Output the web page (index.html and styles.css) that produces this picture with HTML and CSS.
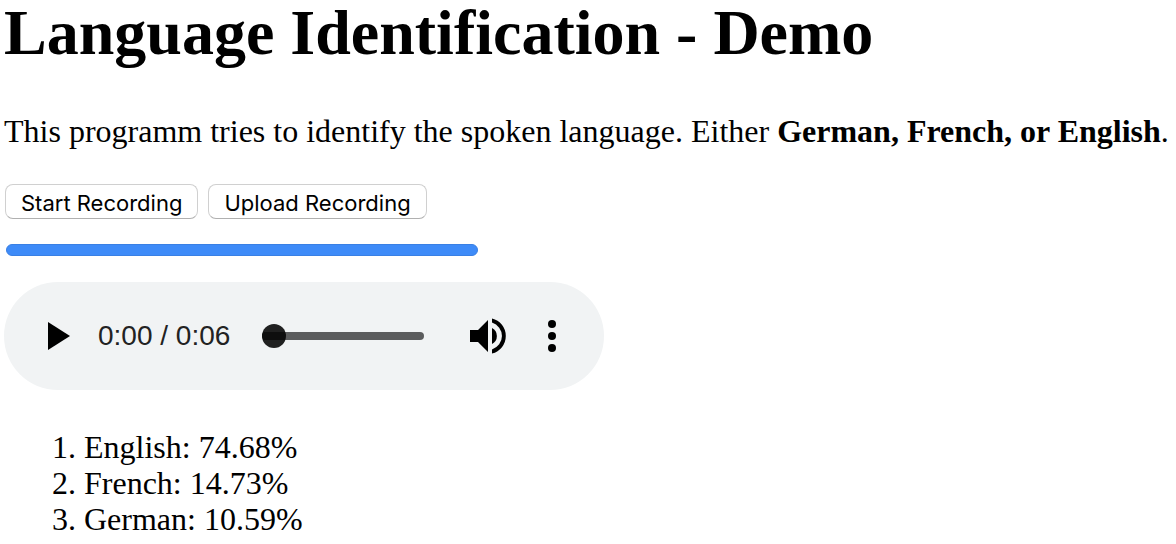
FILE: index.html
```html
<!DOCTYPE html>
<html lang="en">
<head>
<meta charset="utf-8">
<title>Language Identification - Demo</title>
<link rel="stylesheet" href="styles.css">
</head>
<body>
<main class="page">
  <h1 class="title">Language Identification - Demo</h1>
  <p class="intro">This programm tries to identify the spoken language. Either <b>German, French, or English</b>.</p>
  <div class="actions">
    <button class="button" type="button">Start Recording</button>
    <button class="button" type="button">Upload Recording</button>
  </div>
  <div class="progress" role="progressbar" aria-label="Upload progress" aria-valuenow="100"></div>
  <section class="player" aria-label="Recording">
    <button class="icon-button play" type="button" aria-label="Play">
      <svg width="24" height="28" viewBox="0 0 24 28"><path d="M1 0V28L23 14Z"/></svg>
    </button>
    <span class="time">0:00 / 0:06</span>
    <input class="seek" type="range" min="0" max="6" value="0" aria-label="Seek">
    <button class="icon-button volume" type="button" aria-label="Mute">
      <svg width="36" height="36" viewBox="0 0 36 36"><path d="M0 12V24H8L18 34V2L8 12Z"/><path d="M22 10V26A9 9 0 0 0 22 10Z"/><path d="M22 0.500V4.600A14 14 0 0 1 22 31.400V35.500A18 18 0 0 0 22 0.500Z"/></svg>
    </button>
    <button class="icon-button more" type="button" aria-label="More options">
      <svg width="8" height="32" viewBox="0 0 8 32"><circle cx="4" cy="4" r="4"/><circle cx="4" cy="16" r="4"/><circle cx="4" cy="28" r="4"/></svg>
    </button>
  </section>
  <ol class="results">
    <li>English: 74.68%</li>
    <li>French: 14.73%</li>
    <li>German: 10.59%</li>
  </ol>
</main>
</body>
</html>
```
FILE: styles.css
```css
body {
  margin: 0;
  background: #fff;
  color: #000;
  font-family: "Liberation Serif", "Times New Roman", serif;
  font-size: 32px;
  line-height: 36px;
}
.page { padding: 0 4px; }
.title {
  margin: 0;
  padding-bottom: 47px;
  font-size: 64px;
  line-height: 66px;
}
.intro { margin: 0 0 35px; }
.actions { display: flex; gap: 10px; padding-left: 1px; }
.button {
  height: 35px;
  padding: 1px 15px 0;
  border: 1px solid #d0d0d0;
  border-bottom-color: #b0b0b0;
  border-radius: 8px;
  background: #fff;
  color: #000;
  font: 22px/34px Inter, sans-serif;
}
.progress {
  box-sizing: border-box;
  width: 472px;
  max-width: 100%;
  height: 12px;
  margin: 25px 2px 26px;
  border: 1px solid #3a80e4;
  border-radius: 6px;
  background: #3e8bf8;
}
.player {
  display: flex;
  align-items: center;
  box-sizing: border-box;
  max-width: 600px;
  height: 108px;
  padding: 0 48px 0 43px;
  border-radius: 54px;
  background: #f1f3f4;
}
.icon-button {
  display: flex;
  padding: 0;
  border: 0;
  background: none;
}
.time {
  margin: 0 32px 0 27px;
  font: 28px/36px "Liberation Sans", Arial, sans-serif;
  color: #222;
  white-space: nowrap;
}
.seek {
  flex: 1;
  min-width: 0;
  height: 24px;
  margin: 0 46px 0 0;
  appearance: none;
  background: none;
}
.seek::-webkit-slider-runnable-track {
  height: 8px;
  border-radius: 4px;
  background: #5b5c5d;
}
.seek::-webkit-slider-thumb {
  appearance: none;
  width: 24px;
  height: 24px;
  margin-top: -8px;
  border-radius: 50%;
  background: linear-gradient(#202020 8px, #0e0e0e 8px 16px, #202020 16px);
}
.more { margin-left: 42px; }
.results { margin: 39px 0 0; padding-left: 80px; }
```
